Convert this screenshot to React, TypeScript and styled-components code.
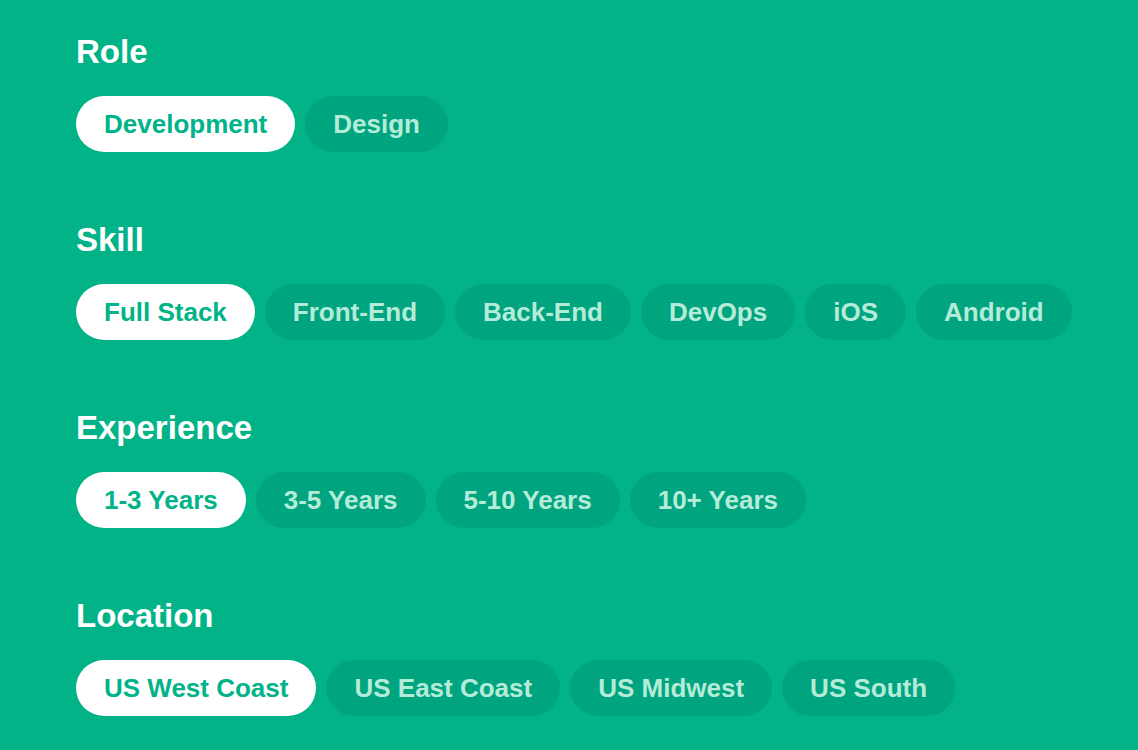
import { useState } from 'react';
import styled, { createGlobalStyle } from 'styled-components';

const GlobalStyle = createGlobalStyle`
  html, body {
    margin: 0;
    padding: 0;
    background: #02b388;
  }
  body {
    font-family: 'Liberation Sans', Arial, sans-serif;
    -webkit-font-smoothing: antialiased;
  }
`;

const Page = styled.div`
  min-height: 750px;
  box-sizing: border-box;
  padding: 32px 0 0 76px;
  display: flex;
  flex-direction: column;
  gap: 68px;
`;

const Section = styled.section`
  display: flex;
  flex-direction: column;
  gap: 24px;
`;

const Heading = styled.h2`
  margin: 0;
  font-size: 33px;
  line-height: 40px;
  font-weight: 700;
  color: #ffffff;
`;

const PillRow = styled.div`
  display: flex;
  gap: 10px;
`;

const Pill = styled.button<{ $active: boolean }>`
  height: 56px;
  padding: 0 28px;
  border: none;
  border-radius: 28px;
  font-family: inherit;
  font-size: 26px;
  font-weight: 700;
  cursor: pointer;
  background: ${(p) => (p.$active ? '#ffffff' : '#00a47e')};
  color: ${(p) => (p.$active ? '#00b388' : '#b4ecd9')};
`;

const filters = [
  { title: 'Role', options: ['Development', 'Design'] },
  { title: 'Skill', options: ['Full Stack', 'Front-End', 'Back-End', 'DevOps', 'iOS', 'Android'] },
  { title: 'Experience', options: ['1-3 Years', '3-5 Years', '5-10 Years', '10+ Years'] },
  { title: 'Location', options: ['US West Coast', 'US East Coast', 'US Midwest', 'US South'] },
];

const App = () => {
  const [selected, setSelected] = useState<Record<string, string>>({
    Role: 'Development',
    Skill: 'Full Stack',
    Experience: '1-3 Years',
    Location: 'US West Coast',
  });

  return (
    <>
      <GlobalStyle />
      <Page>
        {filters.map((f) => (
          <Section key={f.title}>
            <Heading>{f.title}</Heading>
            <PillRow>
              {f.options.map((o) => (
                <Pill
                  key={o}
                  $active={selected[f.title] === o}
                  onClick={() => setSelected({ ...selected, [f.title]: o })}>
                  {o}
                </Pill>
              ))}
            </PillRow>
          </Section>
        ))}
      </Page>
    </>
  );
};

export default App;
